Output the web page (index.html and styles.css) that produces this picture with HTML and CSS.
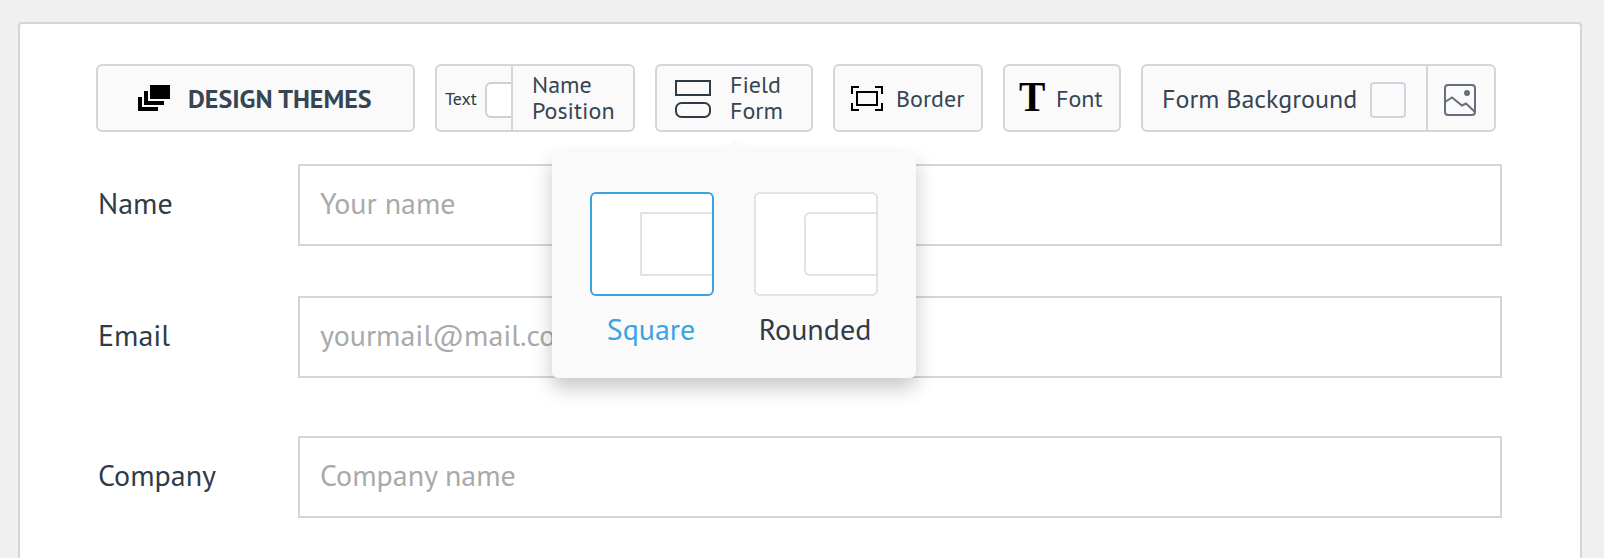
FILE: index.html
```html
<!DOCTYPE html>
<html lang="en">
<head>
<meta charset="utf-8">
<title>Form designer</title>
<link rel="stylesheet" href="styles.css">
</head>
<body>
<main class="panel">
  <div class="toolbar">
    <div class="tool tool-themes">
      <svg width="32" height="26" viewBox="0 0 32 26"><path d="M12 0h20v14H12zM6 6h4v10h16v4H6zM0 12h4v10h16v4H0z"/></svg>
      <span>DESIGN THEMES</span>
    </div>
    <div class="tool tool-position">
      <div class="position-preview"><span class="preview-text">Text</span><span class="half-box"></span></div>
      <div class="two-lines">Name<br>Position</div>
    </div>
    <div class="tool tool-field">
      <svg width="36" height="38" viewBox="0 0 36 38" fill="none" stroke="#2f3b47" stroke-width="2"><path d="M1 1h34v14H1z"/><rect x="1" y="23" width="34" height="14" rx="5.5"/></svg>
      <div class="two-lines">Field<br>Form</div>
      <div class="popover">
        <div class="option selected">
          <div class="tile"><div class="corner"></div></div>
          <span class="caption">Square</span>
        </div>
        <div class="option">
          <div class="tile"><div class="corner round"></div></div>
          <span class="caption">Rounded</span>
        </div>
      </div>
    </div>
    <div class="tool tool-border">
      <svg width="32" height="25" viewBox="0 0 32 25" fill="none" stroke="#000" stroke-width="2"><path d="M1 8V1h7M24 1h7v7M31 17v7h-7M8 24H1v-7"/><path d="M6 6h20v13H6z"/></svg>
      <span>Border</span>
    </div>
    <div class="tool tool-font">
      <span class="serif-t">T</span>
      <span>Font</span>
    </div>
    <div class="tool tool-background">
      <div class="background-color"><span class="background-text">Form Background</span><span class="swatch"></span></div>
      <div class="background-image">
        <svg width="32" height="32" viewBox="0 0 32 32" fill="none" stroke="#686f7c" stroke-width="2"><rect x="1" y="1" width="30" height="30" rx="3"/><path d="M1 18l7-4.500 10 8 4-2 9 8.500"/><circle cx="23" cy="9" r="3" fill="#686f7c" stroke="none"/></svg>
      </div>
    </div>
  </div>
  <form class="fields">
    <div class="row"><label class="label">Name</label><div class="input">Your name</div></div>
    <div class="row"><label class="label">Email</label><div class="input">yourmail@mail.com</div></div>
    <div class="row last"><label class="label">Company</label><div class="input">Company name</div></div>
  </form>
</main>
</body>
</html>
```

FILE: styles.css
```css
* { box-sizing: border-box; }
body {
  margin: 0;
  height: 558px;
  padding: 22px 22px 0 18px;
  background: #f0f0f0;
  font-family: "PT Sans", "Noto Sans", sans-serif;
  color: #2f3b47;
}
svg { display: block; flex: none; }
.panel {
  width: 1564px;
  height: 536px;
  padding: 40px 0 0 76px;
  border: 2px solid #d4d4da;
  border-bottom: 0;
  border-radius: 4px 4px 0 0;
  background: #fff;
}
.toolbar { display: flex; gap: 20px; }
.tool {
  display: flex;
  align-items: center;
  height: 68px;
  border: 2px solid #d4d4da;
  border-radius: 6px;
  background: #fafafa;
  color: #364553;
  font-size: 24px;
  white-space: nowrap;
}
.tool-themes { width: 319px; padding-left: 40px; gap: 18px; font-size: 26px; font-weight: 700; }
.tool-position { width: 200px; }
.position-preview {
  display: flex;
  align-items: center;
  width: 76px;
  height: 64px;
  padding: 4px 0 0 8px;
  border-right: 2px solid #d4d4da;
  color: #2f3b47;
  font-size: 18px;
}
.preview-text { width: 40px; padding-bottom: 4px; }
.half-box {
  width: 26px;
  height: 36px;
  border: 2px solid #cbd0da;
  border-right: 0;
  border-radius: 6px 0 0 6px;
  background: #fff;
}
.two-lines { line-height: 26px; padding-left: 19px; }
.tool-field { position: relative; width: 158px; padding-left: 18px; }
.tool-field > svg { margin-top: 2px; }
.tool-border { width: 150px; padding: 1px 0 0 16px; gap: 13px; }
.tool-font { width: 118px; padding: 1px 0 0 14px; gap: 9px; }
.serif-t {
  width: 28px;
  padding-bottom: 3px;
  color: #000;
  font: 700 42px/48px "Liberation Serif", serif;
  transform: scaleX(.94);
  transform-origin: 0 50%;
}
.tool-background { width: 355px; }
.background-color {
  display: flex;
  align-items: center;
  width: 285px;
  height: 64px;
  padding: 4px 0 0 19px;
  border-right: 2px solid #d4d4da;
  font-size: 26px;
}
.background-text { width: 208px; padding-bottom: 4px; }
.swatch { width: 36px; height: 36px; border: 2px solid #cfd6de; border-radius: 4px; }
.background-image { padding: 4px 0 0 16px; }

.popover {
  position: absolute;
  z-index: 2;
  left: -105px;
  top: 86px;
  display: flex;
  gap: 40px;
  width: 364px;
  height: 226px;
  padding: 40px 38px 0;
  border-radius: 6px;
  background: #fafafa;
  box-shadow: 0 10px 20px rgba(0, 0, 0, .22);
  color: #2f3b47;
  font-size: 30px;
}
.popover::before {
  content: "";
  position: absolute;
  left: 169px;
  top: -13px;
  border: 13px solid transparent;
  border-top: 0;
  border-bottom-color: #fafafa;
}
.option { width: 124px; text-align: center; }
.tile {
  height: 104px;
  padding: 18px 0 0 48px;
  border: 2px solid #e1e1e6;
  border-radius: 6px;
  background: #fff;
}
.corner { height: 64px; border: 2px solid #e1e1e6; border-right: 0; }
.corner.round { border-radius: 6px 0 0 6px; }
.selected { color: #3aa3e3; }
.selected .tile { border-color: #3aa3e3; }
.caption { display: block; margin: 13px 1px 0 -1px; line-height: 40px; }

.fields { margin: 32px 0 0; font-size: 30px; }
.row { display: flex; height: 82px; margin-bottom: 50px; }
.last { margin: 58px 0 0; }
.label { display: flex; align-items: center; width: 202px; padding: 0 0 6px 2px; }
.input {
  display: flex;
  align-items: center;
  width: 1204px;
  padding: 0 0 6px 20px;
  border: 2px solid #d4d4da;
  background: #fff;
  color: #a9a9a9;
}
```
